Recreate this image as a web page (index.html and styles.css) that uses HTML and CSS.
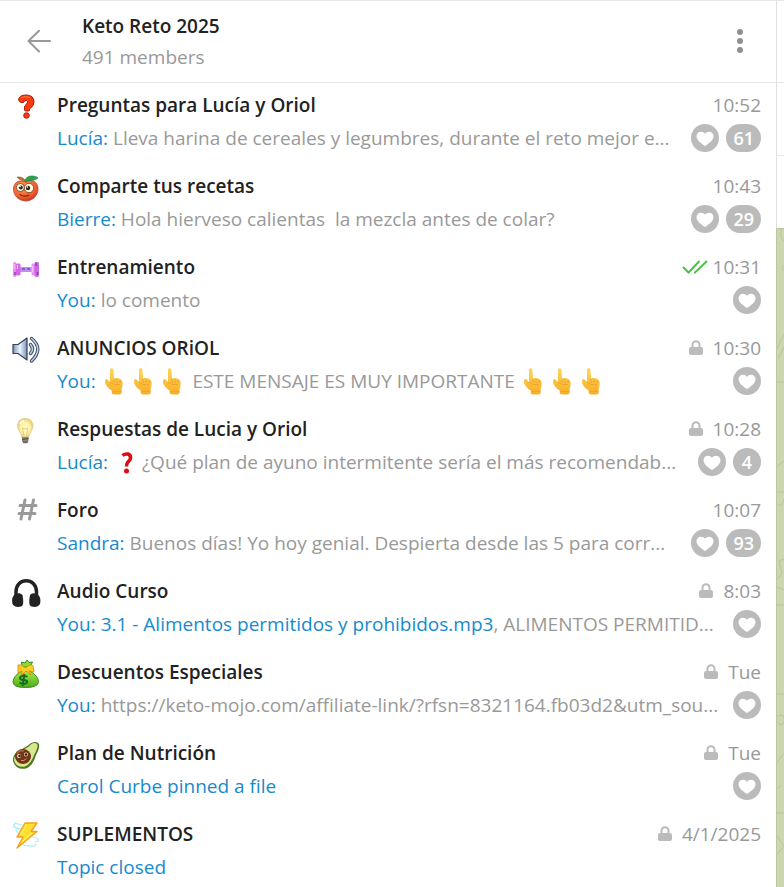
FILE: index.html
```
<!DOCTYPE html>
<html lang="es">
    <head>
        <meta charset="utf-8">
        <title>Keto Reto 2025</title>
        <link rel="stylesheet" href="styles.css">
    </head>
    <body>
        <!-- shared icons -->
        <svg class="defs" width="0" height="0">
            <symbol id="heart" viewBox="0 0 28 28">
                <circle cx="14" cy="14" r="14" fill="#bbb" />
                <path d="M14 22C11 20 5.500 16.500 5.500 12.300C5.500 9.500 7.500 7.700 9.800 7.700C11.600 7.700 13.200 8.600 14 9.800C14.800 8.600 16.400 7.700 18.200 7.700C20.500 7.700 22.500 9.500 22.500 12.300C22.500 16.500 17 20 14 22Z" fill="#fff" />
            </symbol>
            <symbol id="lock" viewBox="0 0 14 16">
                <path d="M3.500 8V4.800a3.500 3.500 0 0 1 7 0V8" fill="none" stroke="#bbb" stroke-width="2" />
                <rect x="0" y="7" width="14" height="8" rx="2" fill="#bbb" />
            </symbol>
            <symbol id="hand" viewBox="0 0 24 28">
                <linearGradient id="skin" x1="0" y1="0" x2="0" y2="1">
                    <stop offset="0" stop-color="#ffd655" />
                    <stop offset="1" stop-color="#f9ad27" />
                </linearGradient>
                <path d="M9 3C9 .5 12.200 .5 12.400 3L13 11.500C16 10.500 19 11.300 20.500 13C22.500 15 21.600 19 20.600 22V26Q20.500 27.500 15.500 27.500Q11 27.500 10.700 26V23.500C8 22 5.500 19.500 4.300 16.500C3.400 13.500 4.300 11.700 6 12L9 15Z" fill="url(#skin)" />
                <path d="M13 12V16M16 12V16M19 13V16M8.500 15.500Q12 16 13 17.500H19M11 24Q15.500 25.600 20.500 24" fill="none" stroke="#e59b28" stroke-width=".7" />
            </symbol>
        </svg>

        <main class="topics">
            <header class="header">
                <button class="icon-btn back" type="button" aria-label="Back">
                    <svg width="24" height="24" viewBox="0 0 24 24" fill="none" stroke="#999" stroke-width="2" stroke-linecap="round" stroke-linejoin="round"><path d="M23 11H1.500M12 .8L1.500 11L12 21.500" /></svg>
                </button>
                <div class="heading">
                    <h1>Keto Reto 2025</h1>
                    <p>491 members</p>
                </div>
                <button class="icon-btn menu" type="button" aria-label="Menu">
                    <svg width="6" height="26" viewBox="0 0 6 26" fill="#909090"><circle cx="3" cy="3" r="3" /><circle cx="3" cy="12" r="3" /><circle cx="3" cy="21" r="3" /></svg>
                </button>
            </header>

            <ul class="list">
                <li class="topic">
                    <svg class="icon" viewBox="0 0 30 30">
                        <path d="M6.500 8Q7 3 14 3Q22 3 22 10Q22 14 17.500 17V18.500Q17 19.500 12.800 18.800Q11 14.500 14.500 12Q17 9.500 14.500 8.500Q12.500 8 11.500 10.500Q8 11.500 6.500 8Z" fill="#fa3b12" stroke="#b51a04" stroke-width="1" stroke-linejoin="round" />
                        <circle cx="14.500" cy="23.500" r="2.800" fill="#fa3b12" stroke="#b51a04" />
                        <path d="M9 6Q13 3.500 18 5.500" fill="none" stroke="#ff8745" />
                    </svg>
                    <div class="line"><h2>Preguntas para Lucía y Oriol</h2><time>10:52</time></div>
                    <div class="line last">
                        <p><span>Lucía:</span> Lleva harina de cereales y legumbres, durante el reto mejor e...</p>
                        <svg class="heart"><use href="#heart" /></svg><b class="count">61</b>
                    </div>
                </li>
                <li class="topic">
                    <svg class="icon" viewBox="0 0 30 30">
                        <radialGradient id="tomato" cx=".4" cy=".3" r=".8"><stop offset="0" stop-color="#ff9a50" /><stop offset=".6" stop-color="#f26331" /><stop offset="1" stop-color="#b9271b" /></radialGradient>
                        <path d="M14 9C20 5 26 9 26 16C26 23 20 28 14 28C7 28 1.500 23 1.500 16C1.500 9 8 6 14 9Z" fill="url(#tomato)" stroke="#ae3b20" stroke-width=".7" />
                        <path d="M14 8Q10 3 5 4L7 6L11 7.500Z" fill="#c47832" stroke="#99511f" stroke-width=".6" />
                        <path d="M13 8Q14 2.500 21 3Q25 3.500 26 5Q22 8 17 7.500L13 9Z" fill="#2ba34d" stroke="#158039" stroke-width=".6" />
                        <circle cx="8.300" cy="14.500" r="4" fill="#fffbe5" stroke="#5b2416" stroke-width=".7" />
                        <circle cx="17" cy="15" r="4.700" fill="#fffbe5" stroke="#5b2416" stroke-width=".7" />
                        <circle cx="8.800" cy="14.500" r="2" fill="#322a10" /><circle cx="16" cy="15" r="2.200" fill="#322a10" />
                        <circle cx="8" cy="13.500" r=".8" fill="#fff" /><circle cx="15.300" cy="14" r=".8" fill="#fff" />
                        <path d="M8 21.500Q12 24.500 17 22" fill="none" stroke="#8b2017" stroke-width="1.200" stroke-linecap="round" />
                    </svg>
                    <div class="line"><h2>Comparte tus recetas</h2><time>10:43</time></div>
                    <div class="line last">
                        <p><span>Bierre:</span> Hola hierveso calientas&nbsp; la mezcla antes de colar?</p>
                        <svg class="heart"><use href="#heart" /></svg><b class="count">29</b>
                    </div>
                </li>
                <li class="topic">
                    <svg class="icon" viewBox="0 0 30 30">
                        <rect x="7" y="13" width="14" height="5" fill="#c58cf0" />
                        <path d="M10 15H13M15 15H18" stroke="#8660cf" stroke-width="2" />
                        <rect x="1" y="8" width="3.500" height="15" rx="1.700" fill="#f486f5" />
                        <rect x="4" y="9.500" width="4.500" height="12" rx="1.500" fill="#d365e6" />
                        <rect x="19.500" y="9.500" width="4" height="12" rx="1.500" fill="#f28df5" />
                        <rect x="22.500" y="8" width="4.500" height="15" rx="1.800" fill="#c66be2" />
                        <path d="M2 10V15M20.500 12V18M5.500 11V15" stroke="#ffbdfc" stroke-width="1.300" />
                        <path d="M24 8.500V12M25.500 18V21M3 18V21" stroke="#70459f" stroke-width="1.300" />
                    </svg>
                    <div class="line"><h2>Entrenamiento</h2>
                        <svg class="checks" viewBox="0 0 26 14" fill="none" stroke="#4fc04a" stroke-width="2"><path d="M1 7L6.500 12.500L17.500 1M12 12.500L13 12.500L25 1" /></svg><time>10:31</time>
                    </div>
                    <div class="line last"><p><span>You:</span> lo comento</p><svg class="heart"><use href="#heart" /></svg></div>
                </li>
                <li class="topic">
                    <svg class="icon" viewBox="0 0 30 30">
                        <linearGradient id="horn"><stop offset="0" stop-color="#7f94b5" /><stop offset=".5" stop-color="#eef5ff" /><stop offset="1" stop-color="#7893bb" /></linearGradient>
                        <path d="M1 9.500H6L15 3V25L6 18.500H1Z" fill="url(#horn)" stroke="#35415c" stroke-width="1.200" stroke-linejoin="round" />
                        <g fill="none" stroke-linecap="round"><path d="M18.500 9.500Q22.500 14 18.500 18.500M19.500 3.500Q32 13.500 19.500 26" stroke="#3e4c67" stroke-width="3.500" /><path d="M18.500 9.500Q22.500 14 18.500 18.500M19.500 3.500Q32 13.500 19.500 26" stroke="#bfd3ef" stroke-width="1.500" /></g>
                    </svg>
                    <div class="line"><h2>ANUNCIOS ORiOL</h2><svg class="lock"><use href="#lock" /></svg><time>10:30</time></div>
                    <div class="line last">
                        <p><span>You:</span> <svg class="emoji"><use href="#hand" /></svg> <svg class="emoji"><use href="#hand" /></svg> <svg class="emoji"><use href="#hand" /></svg>&nbsp; ESTE MENSAJE ES MUY IMPORTANTE <svg class="emoji"><use href="#hand" /></svg> <svg class="emoji"><use href="#hand" /></svg> <svg class="emoji"><use href="#hand" /></svg></p>
                        <svg class="heart"><use href="#heart" /></svg>
                    </div>
                </li>
                <li class="topic">
                    <svg class="icon" viewBox="0 0 30 30">
                        <radialGradient id="bulb"><stop offset="0" stop-color="#fffce2" /><stop offset=".6" stop-color="#fff3a5" /><stop offset="1" stop-color="#e8d077" /></radialGradient>
                        <path d="M10 22Q9.500 18 7.500 15.500Q5.500 12.500 5.500 9.500Q6 2.500 13 2.500Q20.500 2.500 21 9.500Q21 12.500 19 15.500Q17 18 16.500 22Z" fill="url(#bulb)" stroke="#d5c57e" stroke-width=".7" />
                        <path d="M12 21L10.500 12Q13 14 15.500 12L14.500 21" fill="none" stroke="#e6cd78" />
                        <path d="M8 8Q9 5 12 5" fill="none" stroke="#fff" stroke-width="1.500" />
                        <path d="M10 21H16.500V25Q16 27.500 13.300 27.500Q10.500 27.500 10 25Z" fill="#8b8783" /><path d="M10 23.500L16.500 22.500M11 26H15.500" stroke="#504c48" />
                    </svg>
                    <div class="line"><h2>Respuestas de Lucia y Oriol</h2><svg class="lock"><use href="#lock" /></svg><time>10:28</time></div>
                    <div class="line last">
                        <p><span>Lucía:</span> <svg class="emoji" viewBox="0 0 24 28"><path d="M9.500 7.500Q12 5.500 15 6Q18 7 17.500 10.500Q17 12.500 15 14Q13.500 15.500 13.500 18.500" fill="none" stroke="#dc0c12" stroke-width="3.500" /><circle cx="13.500" cy="23" r="2.500" fill="#dc0c12" /></svg> ¿Qué plan de ayuno intermitente sería el más recomendab...</p>
                        <svg class="heart"><use href="#heart" /></svg><b class="count">4</b>
                    </div>
                </li>
                <li class="topic">
                    <svg class="icon" viewBox="0 0 30 30"><path d="M13 3L9 22M21.500 3L17.500 22M8 8.500H24M7 16.500H23" fill="none" stroke="#999" stroke-width="3" stroke-linecap="round" /></svg>
                    <div class="line"><h2>Foro</h2><time>10:07</time></div>
                    <div class="line last">
                        <p><span>Sandra:</span> Buenos días! Yo hoy genial. Despierta desde las 5 para corr...</p>
                        <svg class="heart"><use href="#heart" /></svg><b class="count">93</b>
                    </div>
                </li>
                <li class="topic">
                    <svg class="icon" viewBox="0 0 30 30">
                        <path d="M4 18V14C4 -1 24.500 -1 24.500 14V18" fill="none" stroke="#222" stroke-width="3.500" />
                        <path d="M3 16.500Q8 14 10.500 17Q12.500 28 9 28.500Q3 30 .5 26Q-1 19 3 16.500ZM25.500 16.500Q20.500 14 18 17Q16 28 19.500 28.500Q25.500 30 28 26Q29.500 19 25.500 16.500Z" fill="#222" />
                    </svg>
                    <div class="line"><h2>Audio Curso</h2><svg class="lock"><use href="#lock" /></svg><time>8:03</time></div>
                    <div class="line last">
                        <p><span>You: 3.1 - Alimentos permitidos y prohibidos.mp3</span>, ALIMENTOS PERMITID...</p>
                        <svg class="heart"><use href="#heart" /></svg>
                    </div>
                </li>
                <li class="topic">
                    <svg class="icon" viewBox="0 0 30 30">
                        <linearGradient id="bag" x1="0" y1="0" x2="0" y2="1"><stop offset="0" stop-color="#a5ed43" /><stop offset="1" stop-color="#4aaa20" /></linearGradient>
                        <path d="M10 8L9.500 3L13 4L15 1L17 3.500L20.500 3L18 8Z" fill="#8add38" stroke="#358e1c" />
                        <path d="M10 12Q1 17 1 23Q1 28.500 13.500 28.500Q26.500 28.500 26.500 22.500Q26 17 18 12Z" fill="url(#bag)" stroke="#37901d" />
                        <path d="M6 6Q9 4.500 13.500 9Q19 4 21 7L22 13L17 12L19 16L14 12L10 16V12L6 14Z" fill="#ffcd23" stroke="#df8210" stroke-width=".8" />
                        <path d="M15.500 17.500Q8.500 15.500 8 19Q8 21 12 21Q16 21.500 15 23.500Q12 26.500 7.500 23.500M12.500 15L10.500 27" fill="none" stroke="#17691b" stroke-width="2" />
                    </svg>
                    <div class="line"><h2>Descuentos Especiales</h2><svg class="lock"><use href="#lock" /></svg><time>Tue</time></div>
                    <div class="line last">
                        <p><span>You:</span> https://keto-mojo.com/affiliate-link/?rfsn=8321164.fb03d2&amp;utm_sou...</p>
                        <svg class="heart"><use href="#heart" /></svg>
                    </div>
                </li>
                <li class="topic">
                    <svg class="icon" viewBox="0 0 30 30">
                        <path d="M1 21Q0 13 10 9Q16 6 19 3Q25 .5 27 4Q28 8 24 15Q21 26 14 28.500Q4 30.500 1 21Z" fill="#4e7627" />
                        <path d="M2 20Q2 14 11 10Q17 7 20 3.500Q24 2 25.500 4.500Q26 8 22.500 14Q19 24 13 26.500Q4 28 2 20Z" fill="#d9e88c" />
                        <ellipse cx="11" cy="16.500" rx="8" ry="7.500" fill="#713518" />
                        <path d="M5 14Q7 9.500 12 11" fill="none" stroke="#aa6339" stroke-width="1.500" />
                        <circle cx="7" cy="16" r="2" fill="#f7e4c1" /><circle cx="14" cy="14.500" r="2" fill="#f7e4c1" /><circle cx="7.500" cy="16" r="1.200" fill="#25100a" /><circle cx="14" cy="14.500" r="1.200" fill="#25100a" />
                        <path d="M9 20.500Q12 21.500 14.500 18.500" fill="none" stroke="#d39262" />
                    </svg>
                    <div class="line"><h2>Plan de Nutrición</h2><svg class="lock"><use href="#lock" /></svg><time>Tue</time></div>
                    <div class="line last"><p><span>Carol Curbe pinned a file</span></p><svg class="heart"><use href="#heart" /></svg></div>
                </li>
                <li class="topic">
                    <svg class="icon" viewBox="0 0 30 30">
                        <path d="M9 4L3 2L1.500 5Q4 8 9 8M4 9L6 12M20 16Q28 17 26 20L23 21M7 22Q15 26 22 25L24 23" fill="none" stroke="#a5eef4" stroke-width="1.200" />
                        <path d="M13 2H25L19 10.500H25L5 27L11 16H5Z" fill="#ffe02d" stroke="#f5a322" stroke-width="1.500" stroke-linejoin="round" />
                        <path d="M14.500 4L8 14.500M20 12L11 20" fill="none" stroke="#fff38b" />
                    </svg>
                    <div class="line"><h2>SUPLEMENTOS</h2><svg class="lock"><use href="#lock" /></svg><time>4/1/2025</time></div>
                    <div class="line last"><p><span>Topic closed</span></p></div>
                </li>
            </ul>
        </main>

        <aside class="chat">
            <div class="chat-header"></div>
            <div class="chat-pinned"></div>
            <div class="chat-bar"></div>
            <div class="wallpaper">
                <svg width="8" height="659" viewBox="0 0 8 659" fill="none" stroke="#b9c69b"><path d="M5 0Q4 9 8 12M8 36L6 39L8 42M8 105L1 120M8 118L2 130M0 153H8M0 238L8 232M0 263H8M1 275Q6 280 8 270M8 330L3 332L6 345L1 350M1 358L8 361M0 376H8M0 465H8M0 488Q10 482 8 494Q4 498 0 492M0 535L8 524M0 560L5 557M0 584H8M1 607L8 617M1 625Q5 620 8 618" /></svg>
            </div>
        </aside>
    </body>
</html>
```
FILE: styles.css
```
html, body {
    margin: 0;
    padding: 0;
}
body {
    display: flex;
    height: 100vh;
    overflow: hidden;
    background: #fff;
    color: #999;
    font-family: "Open Sans", sans-serif;
    font-size: 19px;
}
h1, h2, p, ul {
    margin: 0;
    padding: 0;
}
h1, h2 {
    color: #222;
    font-size: 19px;
    font-weight: 600;
}
.defs {
    position: absolute;
}
.topics {
    flex: 1;
    min-width: 0;
}

/* header */
.header {
    display: flex;
    align-items: center;
    box-sizing: border-box;
    height: 83px;
    padding: 0 33px 0 27px;
    border-top: 1px solid #e7e7e7;
    border-bottom: 1px solid #e7e7e7;
}
.heading {
    flex: 1;
    margin-left: 31px;
}
.heading h1, .heading p {
    line-height: 31px;
}
.icon-btn {
    display: flex;
    padding: 0;
    border: 0;
    background: none;
    cursor: pointer;
}

/* topic list */
.list {
    list-style: none;
}
.topic {
    display: grid;
    grid-template-columns: 30px minmax(0, 1fr);
    column-gap: 15px;
    row-gap: 6px;
    padding: 9px 15px 12px 12px;
}
.icon {
    grid-row: 1 / 3;
    width: 30px;
    height: 30px;
}
.line {
    display: flex;
    align-items: center;
    height: 26px;
    white-space: nowrap;
}
.line h2, .line p {
    flex: 1;
    min-width: 0;
    overflow: hidden;
    line-height: 28px;
}
.line.last {
    grid-column: 2;
    height: 28px;
}
.line span {
    color: #168acd;
}
.lock {
    width: 14px;
    height: 16px;
    margin-right: 10px;
}
.checks {
    width: 26px;
    height: 14px;
    margin-right: 5px;
}
.emoji {
    width: 24px;
    height: 28px;
    vertical-align: top;
}
.heart {
    flex: none;
    width: 28px;
    height: 28px;
    margin-left: 7px;
}
.count {
    box-sizing: border-box;
    min-width: 28px;
    height: 28px;
    margin-left: 7px;
    padding: 0 7px;
    border-radius: 14px;
    background: #bbb;
    color: #fff;
    font-size: 18px;
    font-weight: 600;
    line-height: 28px;
    text-align: center;
}

/* edge of the open chat */
.chat {
    display: flex;
    flex-direction: column;
    width: 8px;
}
.chat-header, .chat-pinned, .chat-bar {
    box-sizing: border-box;
    border-left: 1px solid #dfdfdf;
    border-bottom: 1px solid #e7e7e7;
}
.chat-header {
    height: 83px;
    border-top: 1px solid #e7e7e7;
}
.chat-pinned {
    height: 73px;
}
.chat-bar {
    height: 73px;
    border-bottom-color: #b9c69b;
}
.wallpaper {
    flex: 1;
    overflow: hidden;
    box-shadow: inset 1px 0 #bcc8a0;
    background: #cbd7af;
}
```
